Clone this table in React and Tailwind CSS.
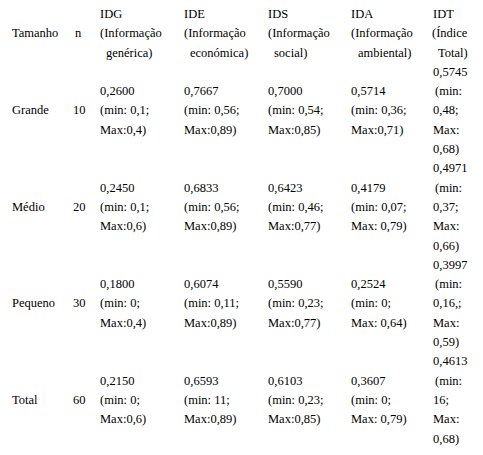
import React from "react";

const rows = [
  {
    label: "Grande",
    n: "10",
    vals: [
      ["0,2600", "(min: 0,1;", "Max:0,4)"],
      ["0,7667", "(min: 0,56;", "Max:0,89)"],
      ["0,7000", "(min: 0,54;", "Max:0,85)"],
      ["0,5714", "(min: 0,36;", "Max:0,71)"],
    ],
    idt: ["0,5745", "(min:", "0,48;", "Max:", "0,68)"],
  },
  {
    label: "Médio",
    n: "20",
    vals: [
      ["0,2450", "(min: 0,1;", "Max:0,6)"],
      ["0,6833", "(min: 0,56;", "Max:0,89)"],
      ["0,6423", "(min: 0,46;", "Max:0,77)"],
      ["0,4179", "(min: 0,07;", "Max: 0,79)"],
    ],
    idt: ["0,4971", "(min:", "0,37;", "Max:", "0,66)"],
  },
  {
    label: "Pequeno",
    n: "30",
    vals: [
      ["0,1800", "(min: 0;", "Max:0,4)"],
      ["0,6074", "(min: 0,11;", "Max:0,89)"],
      ["0,5590", "(min: 0,23;", "Max:0,77)"],
      ["0,2524", "(min: 0;", "Max: 0,64)"],
    ],
    idt: ["0,3997", "(min:", "0,16,;", "Max:", "0,59)"],
  },
  {
    label: "Total",
    n: "60",
    vals: [
      ["0,2150", "(min: 0;", "Max:0,6)"],
      ["0,6593", "(min: 11;", "Max:0,89)"],
      ["0,6103", "(min: 0,23;", "Max:0,85)"],
      ["0,3607", "(min: 0;", "Max: 0,79)"],
    ],
    idt: ["0,4613", "(min:", "16;", "Max:", "0,68)"],
  },
];

const headers = [
  ["IDG", "(Informação", "genérica)", "pl-[6px]"],
  ["IDE", "(Informação", "económica)", "pl-[6px]"],
  ["IDS", "(Informação", "social)", "pl-[6px]"],
  ["IDA", "(Informação", "ambiental)", "pl-[7px]"],
];

export default function App() {
  return (
    <div className="w-[483px] h-[455px] bg-white text-black font-['Liberation_Serif',serif] text-[12.5px] leading-[19.3px] pt-[5px] whitespace-nowrap">
      <table className="table-fixed w-[483px]">
        <colgroup>
          <col className="w-[75px]" />
          <col className="w-[25px]" />
          <col className="w-[84px]" />
          <col className="w-[84px]" />
          <col className="w-[83px]" />
          <col className="w-[82px]" />
          <col className="w-[50px]" />
        </colgroup>
        <tbody>
          <tr>
            <td className="align-middle pl-[12px]">Tamanho</td>
            <td className="align-middle">n</td>
            {headers.map((h) => (
              <td key={h[0]} className="align-middle">
                <div>{h[0]}</div>
                <div>{h[1]}</div>
                <div className={h[3]}>{h[2]}</div>
              </td>
            ))}
            <td className="align-middle">
              <div>IDT</div>
              <div className="-ml-[1px]">(Índice</div>
              <div className="pl-[5px]">Total)</div>
            </td>
          </tr>
          {rows.map((r) => (
            <tr key={r.label}>
              <td className="align-middle pl-[12px]">{r.label}</td>
              <td className="align-middle -translate-x-[2px]">{r.n}</td>
              {r.vals.map((v, i) => (
                <td key={i} className="align-middle">
                  <div>{v[0]}</div>
                  <div>{v[1]}</div>
                  <div>{v[2]}</div>
                </td>
              ))}
              <td className="align-middle">
                <div>{r.idt[0]}</div>
                <div className="pl-[2px]">{r.idt[1]}</div>
                <div>{r.idt[2]}</div>
                <div>{r.idt[3]}</div>
                <div>{r.idt[4]}</div>
              </td>
            </tr>
          ))}
        </tbody>
      </table>
    </div>
  );
}
